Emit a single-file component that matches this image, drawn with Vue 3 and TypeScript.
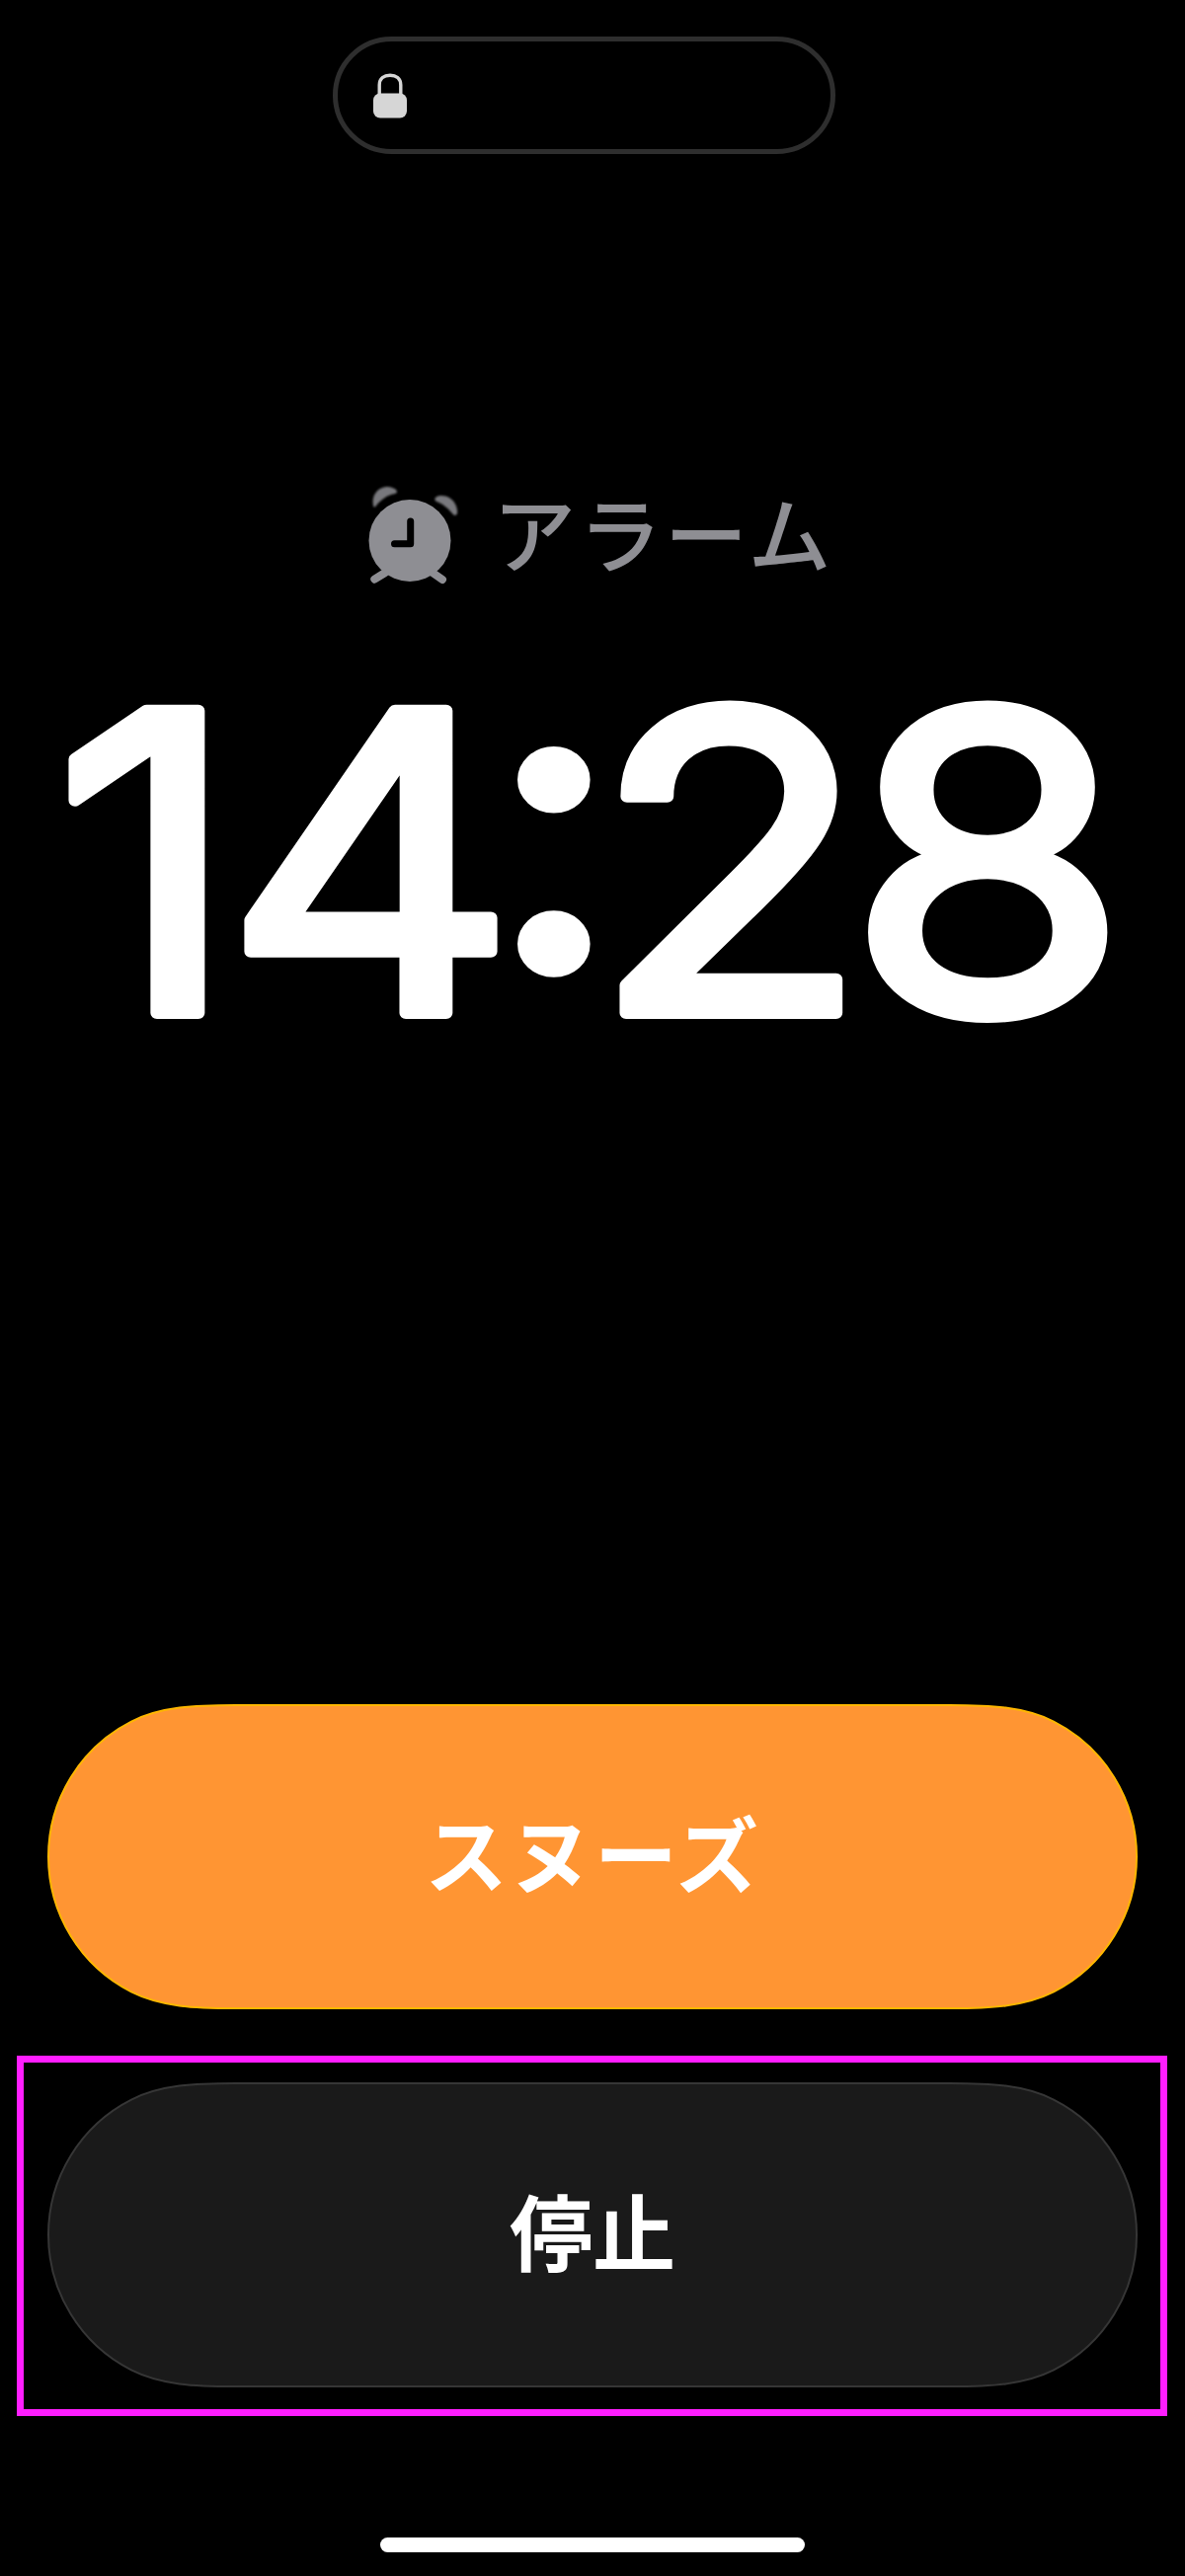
<script setup lang="ts">
const alarmLabel = 'アラーム'
const snoozeLabel = 'スヌーズ'
const stopLabel = '停止'
const pillPath =
  'M1 154.5A153.5 153.5 0 0 1 85 17.600C115 2.400 150 1 190 1H914C954 1 989 2.400 1019 17.600A153.5 153.5 0 0 1 1103 154.5A153.5 153.5 0 0 1 1019 291.400C989 306.600 954 308 914 308H190C150 308 115 306.600 85 291.400A153.5 153.5 0 0 1 1 154.5Z'
</script>

<template>
  <main class="screen">
    <div class="island">
      <svg class="lock" width="40" height="50" viewBox="0 0 40 50" aria-hidden="true">
        <path d="M9.200 26V14C9.200 7 14 4.200 20 4.200S30.800 7 30.800 14V26" fill="none" stroke="#d6d6d6" stroke-width="3.400" />
        <rect x="3" y="22.500" width="34" height="25" rx="7" fill="#d6d6d6" />
      </svg>
    </div>

    <div class="alarm">
      <svg class="clock" width="100" height="110" viewBox="0 0 100 110" aria-hidden="true">
        <defs>
          <filter id="soft" x="-30%" y="-30%" width="160%" height="160%">
            <feGaussianBlur stdDeviation="1.200" />
          </filter>
        </defs>
        <path d="M8 22C6 12 12 4 21 3C26 3 32 5 32 8C32 10 29 10 26 11C20 13 15 17 11 22C10 24 8 24 8 22Z" fill="#8e8e93" opacity="0.85" filter="url(#soft)" />
        <path d="M71 14C74 11 79 12 83 13C90 16 94 24 93 30C92 33 89 32 88 30C84 25 78 20 72 18C70 17 70 15 71 14Z" fill="#8e8e93" opacity="0.85" filter="url(#soft)" />
        <path d="M20 90L9.300 96.700M68 90L78 97" stroke="#8e8e93" stroke-width="8" stroke-linecap="round" />
        <circle cx="45" cy="57.500" r="41.500" fill="#8e8e93" />
        <path d="M45.700 38V60.700H29.500" fill="none" stroke="#000" stroke-width="7" stroke-linecap="round" stroke-linejoin="round" />
      </svg>
      <span class="alarm-label">{{ alarmLabel }}</span>
    </div>

    <svg class="time" width="1200" height="560" viewBox="0 600 1200 560" role="img" aria-label="14:28">
      <text class="time-text" transform="scale(1.09 1)" x="50 208.300 453.900 550 787.400" y="1026">14:28</text>
    </svg>

    <button class="action snooze" type="button">
      <svg class="shape" width="1104" height="309" viewBox="0 0 1104 309" aria-hidden="true">
        <path :d="pillPath" fill="#ff9533" stroke="#ffb700" stroke-width="2" />
      </svg>
      <span class="action-label snooze-label">{{ snoozeLabel }}</span>
    </button>

    <div class="highlight">
      <button class="action stop" type="button">
        <svg class="shape" width="1104" height="309" viewBox="0 0 1104 309" aria-hidden="true">
          <path :d="pillPath" fill="#1a1a1a" stroke="#363636" stroke-width="2" />
        </svg>
        <span class="action-label">{{ stopLabel }}</span>
      </button>
    </div>

    <div class="home-bar"></div>
  </main>
</template>

<style scoped>
.screen {
  box-sizing: border-box;
  display: flex;
  flex-direction: column;
  width: 1200px;
  height: 2609px;
  padding-top: 37px;
  background: #000;
  font-family: "Noto Sans CJK JP", "Noto Sans", sans-serif;
  overflow: hidden;
}

.island {
  box-sizing: border-box;
  display: flex;
  align-items: center;
  align-self: flex-start;
  width: 509px;
  height: 119px;
  margin-left: 337px;
  padding-left: 33px;
  border: 5px solid #2e2e2e;
  border-radius: 60px;
}

.lock {
  display: block;
}

.alarm {
  display: flex;
  align-items: center;
  height: 110px;
  margin-top: 334px;
  padding-left: 370px;
}

.clock {
  display: block;
  flex: none;
}

.alarm-label {
  margin-left: 29px;
  padding-bottom: 14px;
  color: #8e8e93;
  font-size: 84px;
  font-weight: 500;
  letter-spacing: 3px;
  line-height: 96px;
  white-space: nowrap;
}

.time {
  display: block;
  flex: none;
}

.time-text {
  fill: #fff;
  stroke: #fff;
  stroke-width: 12px;
  stroke-linejoin: round;
  font-family: Inter, "Liberation Sans", sans-serif;
  font-size: 421px;
  font-weight: 400;
  font-feature-settings: "case";
}

.action {
  position: relative;
  display: flex;
  align-items: center;
  justify-content: center;
  flex: none;
  width: 1104px;
  height: 309px;
  padding: 0 0 12px;
  border: 0;
  background: none;
  color: #fff;
  font-family: "Noto Sans CJK JP", "Noto Sans", sans-serif;
  font-size: 84px;
  font-weight: 700;
  line-height: 1;
}

.shape {
  position: absolute;
  top: 0;
  left: 0;
  display: block;
}

.action-label {
  position: relative;
}

.snooze-label {
  letter-spacing: 2px;
}

.snooze {
  margin: 566px 0 0 48px;
}

.highlight {
  box-sizing: border-box;
  flex: none;
  width: 1165px;
  height: 365px;
  margin: 47px 0 0 17px;
  padding: 20px 24px;
  border: 7px solid #ff1eff;
}

.home-bar {
  flex: none;
  align-self: flex-start;
  width: 430px;
  height: 15px;
  margin: 123px 0 0 385px;
  border-radius: 8px;
  background: #fff;
}
</style>

<style>
html,
body {
  margin: 0;
  background: #000;
}
</style>
